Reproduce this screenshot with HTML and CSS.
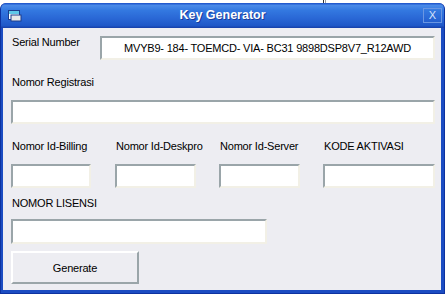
FILE: index.html
```
<!DOCTYPE html>
<html lang="en">
<head>
    <meta charset="UTF-8">
    <title>Key Generator</title>
    <link rel="stylesheet" href="styles.css">
</head>
<body>
    <div class="tick"></div>
    <div class="window">
        <div class="titlebar">
            <svg class="app-icon" width="14" height="12" viewBox="0 0 14 12">
                <rect x="0.5" y="0.5" width="11" height="9" fill="#fff" stroke="#1c3c8c"/>
                <rect x="1" y="1" width="10" height="3" fill="#5ec8e8"/>
                <rect x="3" y="5" width="10" height="6" fill="#e8e8e8" stroke="#1c3c8c"/>
            </svg>
            <span class="title">Key Generator</span>
            <span class="close">X</span>
        </div>
        <div class="client">
            <div class="serial-row">
                <label class="label">Serial Number</label>
                <div class="box serial">MVYB9- 184- TOEMCD- VIA- BC31 9898DSP8V7_R12AWD</div>
            </div>

            <label class="label reg-label">Nomor Registrasi</label>
            <div class="box reg"></div>

            <div class="id-row">
                <div class="field billing">
                    <label class="label">Nomor Id-Billing</label>
                    <div class="box"></div>
                </div>
                <div class="field">
                    <label class="label">Nomor Id-Deskpro</label>
                    <div class="box"></div>
                </div>
                <div class="field">
                    <label class="label">Nomor Id-Server</label>
                    <div class="box"></div>
                </div>
                <div class="field aktivasi">
                    <label class="label">KODE AKTIVASI</label>
                    <div class="box"></div>
                </div>
            </div>

            <label class="label lic-label">NOMOR LISENSI</label>
            <div class="box lic"></div>

            <button class="btn">Generate</button>
        </div>
    </div>
</body>
</html>
```

FILE: styles.css
```
body {
    margin: 0;
    background: #fff;
    font-family: "Liberation Sans", Arial, sans-serif;
    font-size: 11px;
    letter-spacing: -0.2px;
    color: #000;
}
.tick {
    position: absolute;
    left: 323px;
    top: 0;
    width: 3px;
    height: 3px;
    border-left: 1px solid #333;
    border-right: 1px solid #999;
    box-sizing: border-box;
}
.window {
    margin-top: 3px;
    width: 445px;
    height: 291px;
    background: #1b4cc2;
    border-left: 1px solid #0d32a0;
    border-right: 1px solid #0d32a0;
    border-bottom: 1px solid #0d32a0;
    box-sizing: border-box;
    display: flex;
    flex-direction: column;
    border-radius: 6px 6px 0 0;
}
.titlebar {
    flex-shrink: 0;
    height: 25px;
    display: flex;
    align-items: center;
    padding: 0 2px 0 7px;
    background: linear-gradient(#1a4fc8 0%, #4a8ae8 10%, #3378e0 30%, #2a68d6 60%, #1f58c8 90%, #163fa8 100%);
    border-radius: 6px 6px 0 0;
    position: relative;
}
.app-icon {
    display: block;
    margin-top: 1px;
}
.title {
    position: absolute;
    left: 0;
    right: 0;
    top: 5px;
    text-align: center;
    color: #fff;
    font-family: "Liberation Sans", Arial, sans-serif;
    font-weight: bold;
    font-size: 12.5px;
    letter-spacing: 0;
    text-shadow: 1px 1px 0 #1a3c9a;
}
.close {
    margin-left: auto;
    width: 17px;
    height: 13px;
    border: 1px solid #6a96e2;
    color: #d6e2fa;
    font-size: 11px;
    letter-spacing: 0;
    line-height: 13px;
    text-align: center;
    position: relative;
    z-index: 1;
}
.client {
    flex: 1;
    min-height: 0;
    margin: 0 3px 3px 2px;
    background: #ededf2;
    padding: 8px 0 0 8px;
    display: flex;
    flex-direction: column;
    align-items: flex-start;
}
.label {
    display: block;
    line-height: 13px;
    padding-left: 1px;
    white-space: nowrap;
}
.box {
    background: #fff;
    border-top: 2px solid #9aa5a9;
    border-left: 2px solid #9aa5a9;
    border-bottom: 2px solid #f2f0e6;
    border-right: 2px solid #f2f0e6;
    box-sizing: border-box;
    height: 24px;
    flex-shrink: 0;
}
.serial-row {
    display: flex;
    align-items: flex-start;
}
.serial-row .label {
    width: 88px;
}
.serial {
    width: 335px;
    text-align: center;
    line-height: 20px;
    white-space: nowrap;
}
.reg-label {
    margin-top: 16px;
}
.reg {
    width: 424px;
    margin-top: 11px;
}
.id-row {
    display: flex;
    gap: 23px;
    margin-top: 16px;
}
.field {
    flex: none;
    width: 81px;
    display: flex;
    flex-direction: column;
    gap: 11px;
}
.field.billing {
    width: 80px;
    margin-right: 1px;
}
.field.aktivasi {
    width: 112px;
}
.lic-label {
    margin-top: 9px;
}
.lic {
    width: 256px;
    height: 25px;
    margin-top: 9px;
}
.btn {
    margin-top: 7px;
    width: 128px;
    height: 33px;
    flex-shrink: 0;
    background: #ededf2;
    border-top: 2px solid #fff;
    border-left: 2px solid #fff;
    border-bottom: 2px solid #9aa5a9;
    border-right: 2px solid #9aa5a9;
    font-family: "Liberation Sans", Arial, sans-serif;
    font-size: 11px;
    letter-spacing: -0.2px;
    color: #000;
    padding: 0;
}
```
